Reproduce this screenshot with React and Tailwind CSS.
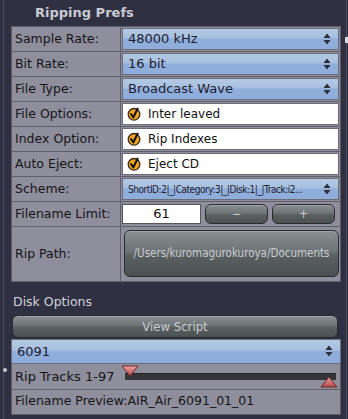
import React from "react";

const font = { fontFamily: '"DejaVu Sans", "Liberation Sans", sans-serif' };
const condensed = { fontFamily: '"DejaVu Sans Condensed", "DejaVu Sans", sans-serif' };

function Arrows() {
  return (
    <svg width="8" height="12" viewBox="0 0 8 12" className="shrink-0">
      <path d="M4 0.5 L7.5 5 L0.5 5 Z" fill="#2b2f3a" />
      <path d="M4 11.5 L7.5 7 L0.5 7 Z" fill="#2b2f3a" />
    </svg>
  );
}

function Check() {
  return (
    <svg width="14" height="14" viewBox="0 0 14 14" className="shrink-0">
      <circle cx="7" cy="7.3" r="5.8" fill="#f2a51f" stroke="#3a2a10" strokeWidth="1.3" />
      <path d="M4 7 L6.4 10.3 L10.6 1.6" fill="none" stroke="#111" strokeWidth="2.1" strokeLinecap="round" strokeLinejoin="round" />
    </svg>
  );
}

function Select({ children, small }) {
  return (
    <div className="h-full w-full flex items-center gap-[4px] pl-[5px] pr-[7px] overflow-hidden border border-[#6c6b78] bg-[linear-gradient(to_bottom,#b3c9e3_0%,#a7bfdf_45%,#90aedb_50%,#8fadda_100%)]">
      <span
        className={
          "flex-1 min-w-0 whitespace-nowrap overflow-hidden text-[#1d2030] " +
          (small ? "text-[10px] tracking-[-0.45px]" : "text-[13px]")
        }
        style={small ? condensed : undefined}
      >
        {children}
      </span>
      <Arrows />
    </div>
  );
}

function CheckBox({ children }) {
  return (
    <div className="h-full w-full flex items-center gap-[7px] pl-[4px] bg-white border border-[#6c6b78]">
      <Check />
      <span className="text-[12px] text-[#111]">{children}</span>
    </div>
  );
}

function GrayButton({ children, className = "" }) {
  return (
    <div
      className={
        "flex items-center justify-center rounded-[6px] border border-[#2a2b2e] bg-[linear-gradient(to_bottom,#8a8f92_0%,#6d7376_45%,#5a5f62_55%,#4c5153_100%)] text-[#c8ccce] shadow-[inset_0_1px_0_#a0a4a6] whitespace-nowrap overflow-hidden " +
        className
      }
      style={condensed}
    >
      {children}
    </div>
  );
}

function Row({ label, children, tall }) {
  return (
    <div className={"flex border-b border-[#5f5e6b] " + (tall ? "h-[55px]" : "h-[25px]")}>
      <div className="w-[109px] shrink-0 flex items-center pl-[3px] border-r border-[#5f5e6b] text-[12.5px] text-[#151518]">
        {label}
      </div>
      <div className="flex-1 min-w-0 p-[1px]">{children}</div>
    </div>
  );
}

export default function App() {
  return (
    <div className="w-[348px] h-[419px] bg-[#2f3041] relative overflow-hidden" style={font}>
      <div className="h-full ml-[3px] border-l border-[#4b4c5d] pl-[7px] pr-[7px]">
        <div className="h-[26px] flex items-end pl-[24px] pb-[4px] text-[13px] font-bold text-[#c9cad3]">
          Ripping Prefs
        </div>

        {/* prefs table */}
        <div className="w-[330px] bg-[#8f8e9c] border border-[#5c5b68] border-b-0">
          <Row label="Sample Rate:">
            <Select>48000 kHz</Select>
          </Row>
          <Row label="Bit Rate:">
            <Select>16 bit</Select>
          </Row>
          <Row label="File Type:">
            <Select>Broadcast Wave</Select>
          </Row>
          <Row label="File Options:">
            <CheckBox>Inter leaved</CheckBox>
          </Row>
          <Row label="Index Option:">
            <CheckBox>Rip Indexes</CheckBox>
          </Row>
          <Row label="Auto Eject:">
            <CheckBox>Eject CD</CheckBox>
          </Row>
          <Row label="Scheme:">
            <Select small>ShortID:2|_|Category:3|_|Disk:1|_|Track:i2...</Select>
          </Row>
          <Row label="Filename Limit:">
            <div className="h-full flex items-center gap-[4px]">
              <div className="w-[79px] h-[20px] bg-white border border-[#555] flex items-center justify-center text-[13px] text-[#111]">
                61
              </div>
              <GrayButton className="w-[63px] h-[20px] text-[12px]">−</GrayButton>
              <GrayButton className="w-[63px] h-[20px] text-[12px]">+</GrayButton>
            </div>
          </Row>
          <Row label="Rip Path:" tall>
            <div className="h-full pl-[2px] pt-[2px] pb-[3px]">
              <GrayButton className="h-full text-[11.5px]">/Users/kuromagurokuroya/Documents</GrayButton>
            </div>
          </Row>
        </div>

        <div className="mt-[11px] pl-[2px] text-[12.5px] text-[#d2d3da]">Disk Options</div>

        <GrayButton className="mt-[3px] w-[326px] ml-[1px] h-[23px] text-[13px]">View Script</GrayButton>

        <div className="mt-[1px] w-[330px] h-[25px]">
          <Select>6091</Select>
        </div>

        <div className="w-[330px] bg-[#8f8e9c] border-x border-b border-[#5c5b68]">
          <div className="h-[26px] flex items-center border-b border-[#5f5e6b]">
            <span className="w-[109px] shrink-0 pl-[3px] text-[13px] text-[#151518] whitespace-nowrap">
              Rip Tracks 1-97
            </span>
            <div className="flex-1 relative h-full mr-[2px]">
              <div className="absolute left-[4px] right-[2px] top-[9px] h-[7px] bg-[#353538] border-t border-[#222]" />
              <svg width="18" height="12" viewBox="0 0 18 12" className="absolute left-0 top-[1px]">
                <defs>
                  <linearGradient id="ta" x1="0" y1="0" x2="0" y2="1">
                    <stop offset="0" stopColor="#f0a0a0" />
                    <stop offset="1" stopColor="#b84848" />
                  </linearGradient>
                </defs>
                <path d="M1 1 L17 1 L9 11 Z" fill="url(#ta)" stroke="#6b2a2a" strokeWidth="1" strokeLinejoin="round" />
              </svg>
              <svg width="18" height="12" viewBox="0 0 18 12" className="absolute right-0 bottom-[1px]">
                <defs>
                  <linearGradient id="tb" x1="0" y1="0" x2="0" y2="1">
                    <stop offset="0" stopColor="#f0a0a0" />
                    <stop offset="1" stopColor="#b84848" />
                  </linearGradient>
                </defs>
                <path d="M9 1 L17 11 L1 11 Z" fill="url(#tb)" stroke="#6b2a2a" strokeWidth="1" strokeLinejoin="round" />
              </svg>
            </div>
          </div>
          <div className="h-[24px] flex items-center pl-[3px] text-[12.5px] text-[#151518]">
            Filename Preview:AIR_Air_6091_01_01
          </div>
        </div>
      </div>

      {/* window edge decorations */}
      <div className="absolute left-[3px] top-[368px] w-[4px] h-[4px] rounded-full bg-[#c8c8d0]" />
      <div className="absolute right-[1px] top-0 bottom-0 w-[1px] bg-[#4b4c5d]" />
      <div className="absolute right-0 top-[37px] w-[3px] h-[6px] bg-[#d8d8e0]" />
    </div>
  );
}
